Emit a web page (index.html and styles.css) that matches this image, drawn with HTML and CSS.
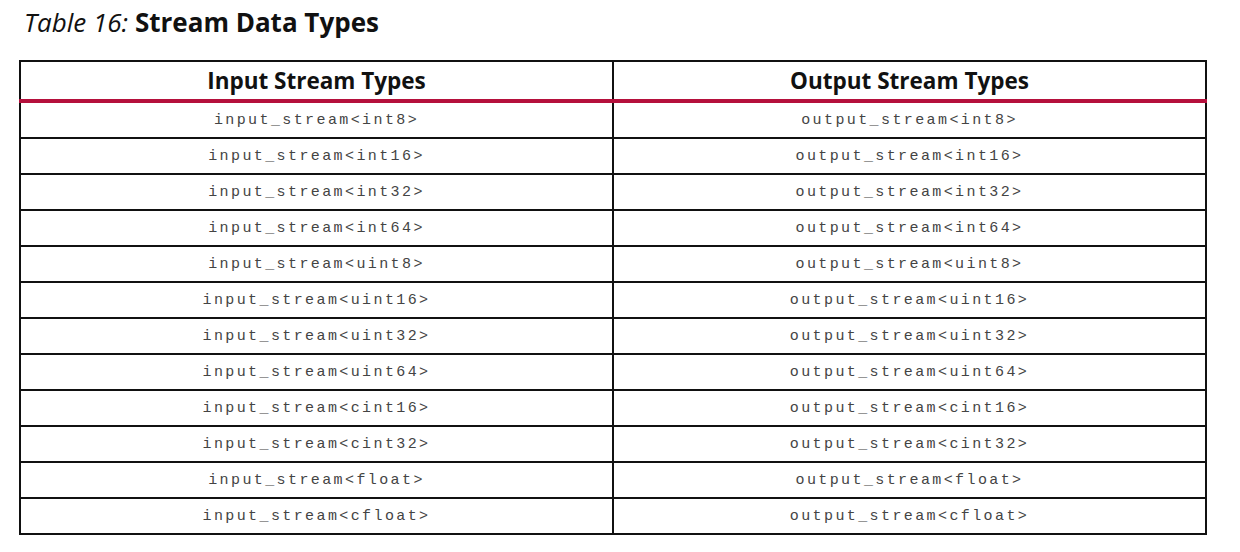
FILE: index.html
```html
<!DOCTYPE html>
<html>
<head>
<meta charset="utf-8">
<link rel="stylesheet" href="styles.css">
</head>
<body>
<div class="caption"><span class="label">Table 16:</span> <span class="name">Stream Data Types</span></div>
<table class="types">
<thead>
<tr><th>Input Stream Types</th><th>Output Stream Types</th></tr>
</thead>
<tbody>
<tr><td>input_stream&lt;int8&gt;</td><td>output_stream&lt;int8&gt;</td></tr>
<tr><td>input_stream&lt;int16&gt;</td><td>output_stream&lt;int16&gt;</td></tr>
<tr><td>input_stream&lt;int32&gt;</td><td>output_stream&lt;int32&gt;</td></tr>
<tr><td>input_stream&lt;int64&gt;</td><td>output_stream&lt;int64&gt;</td></tr>
<tr><td>input_stream&lt;uint8&gt;</td><td>output_stream&lt;uint8&gt;</td></tr>
<tr><td>input_stream&lt;uint16&gt;</td><td>output_stream&lt;uint16&gt;</td></tr>
<tr><td>input_stream&lt;uint32&gt;</td><td>output_stream&lt;uint32&gt;</td></tr>
<tr><td>input_stream&lt;uint64&gt;</td><td>output_stream&lt;uint64&gt;</td></tr>
<tr><td>input_stream&lt;cint16&gt;</td><td>output_stream&lt;cint16&gt;</td></tr>
<tr><td>input_stream&lt;cint32&gt;</td><td>output_stream&lt;cint32&gt;</td></tr>
<tr><td>input_stream&lt;float&gt;</td><td>output_stream&lt;float&gt;</td></tr>
<tr><td>input_stream&lt;cfloat&gt;</td><td>output_stream&lt;cfloat&gt;</td></tr>
</tbody>
</table>
</body>
</html>
```
FILE: styles.css
```css
html, body {
  margin: 0;
  padding: 0;
  background: #ffffff;
}
body {
  font-family: "Open Sans", sans-serif;
  color: #111;
}
.caption {
  padding: 5px 0 0 24px;
  height: 50px;
  box-sizing: border-box;
  font-size: 26px;
  line-height: 34px;
  color: #111;
}
.caption .label {
  font-style: italic;
}
.caption .name {
  font-weight: 700;
}
.types {
  margin-left: 19px;
  margin-top: 10px;
  width: 1188px;
  border-collapse: collapse;
  border: 2px solid #111;
  table-layout: fixed;
}
.types th {
  height: 37px;
  padding: 0;
  font-size: 22.5px;
  font-weight: 700;
  color: #111;
  text-align: center;
  border-left: 2px solid #111;
  border-bottom: 4px solid #b5103c;
}
.types td {
  height: 34px;
  padding: 0;
  text-align: center;
  font-family: "Liberation Mono", monospace;
  font-size: 15px;
  letter-spacing: 2.4px;
  color: #444;
  border-left: 2px solid #111;
  border-top: 2px solid #111;
}
.types th:first-child, .types td:first-child {
  border-left: none;
  width: 591px;
}
.types tbody tr:first-child td {
  border-top: none;
}
```
